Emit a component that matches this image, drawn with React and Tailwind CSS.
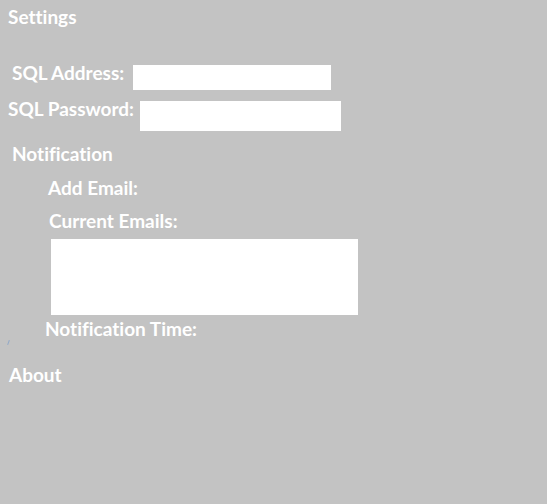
import React from "react";

export default function App() {
  return (
    <div
      className="h-[504px] w-[547px] overflow-hidden bg-[#c3c3c3] pt-[7px] text-[19px] font-bold leading-none text-white [font-variant-ligatures:none]"
      style={{ fontFamily: "Lato, 'Open Sans', sans-serif" }}
    >
      <div className="pl-[8px]">Settings</div>

      <div className="mt-[37px] flex items-start pl-[12px]">
        <span className="w-[121px] shrink-0 whitespace-nowrap">SQL Address:</span>
        <div className="mt-[2px] h-[25px] w-[198px] bg-white" />
      </div>

      <div className="mt-[9px] flex items-start pl-[8px]">
        <span className="w-[132px] shrink-0 whitespace-nowrap">SQL Password:</span>
        <div className="mt-[2px] h-[30px] w-[201px] bg-white" />
      </div>

      <div className="mt-[13px] pl-[12px]">Notification</div>

      <div className="mt-[15px] pl-[48px]">Add Email:</div>
      <div className="mt-[14px] pl-[49px]">Current Emails:</div>
      <div className="ml-[51px] mt-[9px] h-[76px] w-[307px] bg-white" />

      <div className="relative mt-[4px] pl-[45px]">
        Notification Time:
        <span className="absolute left-[8px] top-[21px] h-[5px] w-[1px] rotate-[20deg] bg-[#8fa8c8]" />
      </div>

      <div className="mt-[27px] pl-[9px]">About</div>
    </div>
  );
}
